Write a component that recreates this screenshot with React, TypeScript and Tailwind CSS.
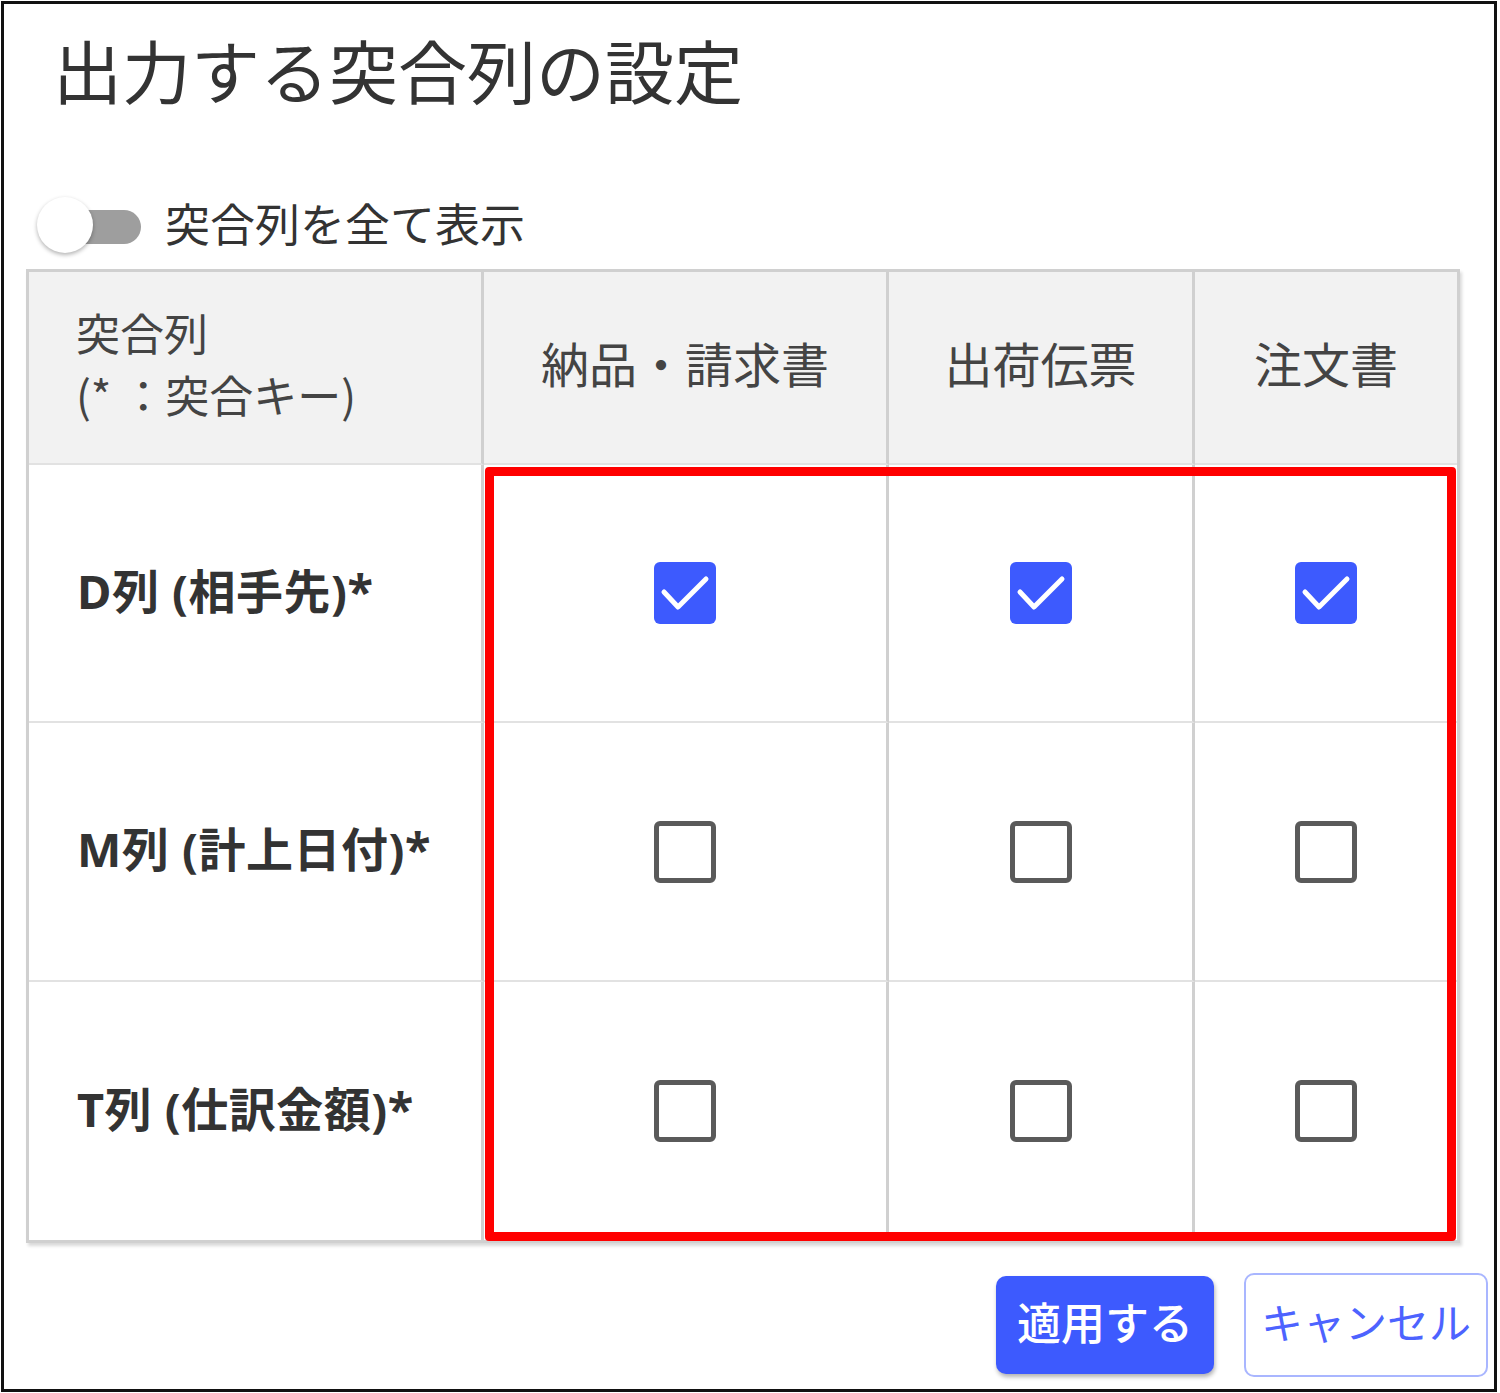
import React from "react";

const columns = ["納品・請求書", "出荷伝票", "注文書"];

const rows = [
  { label: "D列 (相手先)*", checked: [true, true, true] },
  { label: "M列 (計上日付)*", checked: [false, false, false] },
  { label: "T列 (仕訳金額)*", checked: [false, false, false] },
];

function Checkbox({ checked }: { checked: boolean }) {
  if (checked) {
    return (
      <div className="flex h-[62px] w-[62px] items-center justify-center rounded-[6px] bg-[#3d5afe]">
        <svg width="62" height="62" viewBox="0 0 62 62" fill="none">
          <polyline
            points="10,30 24,45 52,17"
            stroke="white"
            strokeWidth="5"
            strokeLinecap="round"
            strokeLinejoin="round"
          />
        </svg>
      </div>
    );
  }
  return (
    <div className="h-[62px] w-[62px] rounded-[6px] border-[5px] border-[#5a5a5a] bg-white" />
  );
}

function Toggle() {
  return (
    <div className="relative h-[60px] w-[104px]">
      <div className="absolute left-[14px] top-[13px] h-[34px] w-[90px] rounded-full bg-[#9e9e9e]" />
      <div className="absolute left-0 top-0 h-[56px] w-[56px] rounded-full bg-white shadow-[0_2px_4px_rgba(0,0,0,0.3)]" />
    </div>
  );
}

function clsCell(lastRow: boolean, lastCol: boolean) {
  if (lastRow && lastCol) return "flex items-center justify-center";
  if (lastRow) return "flex items-center justify-center border-r-[3px] border-r-[#d0d0d0]";
  if (lastCol) return "flex items-center justify-center border-b-2 border-b-[#e2e2e2]";
  return "flex items-center justify-center border-b-2 border-r-[3px] border-b-[#e2e2e2] border-r-[#d0d0d0]";
}

export default function App() {
  return (
    <div className="h-[1393px] w-[1500px] bg-white p-px font-['Noto_Sans','Noto_Sans_CJK_JP',sans-serif]">
      <div className="flex h-[1391px] w-[1496px] flex-col border-[3px] border-[#111]">
        <h1 className="pl-[49px] pt-[31px] text-[69px] leading-[69px] font-normal text-[#333] font-['Noto_Sans_CJK_JP',sans-serif]">
          出力する突合列の設定
        </h1>

        <div className="ml-[33px] mt-[93px] flex h-[60px] items-center gap-[24px]">
          <Toggle />
          <span className="pb-[9px] text-[45px] leading-none text-[#333] font-['Noto_Sans_CJK_JP',sans-serif]">
            突合列を全て表示
          </span>
        </div>

        <div className="relative ml-[22px] mt-[12px] w-[1434px]">
          <div className="grid grid-cols-[455px_405px_306px_262px] grid-rows-[193px_258px_259px_258px] border-[3px] border-[#d0d0d0] shadow-[2px_3px_3px_rgba(0,0,0,0.15)]">
            <div className="flex flex-col justify-center border-b-2 border-r-[3px] border-b-[#e2e2e2] border-r-[#d0d0d0] bg-[#f2f2f2] pb-[9px] pl-[47px] text-[44px] leading-[62px] text-[#444] font-['Noto_Sans_CJK_JP',sans-serif]">
              <span>突合列</span>
              <span>(* ：突合キー)</span>
            </div>
            {columns.map((c, i) => (
              <div
                key={c}
                className={
                  i < columns.length - 1
                    ? "flex items-center justify-center border-b-2 border-r-[3px] border-b-[#e2e2e2] border-r-[#d0d0d0] bg-[#f2f2f2] pb-[12px] text-[48px] text-[#444] font-['Noto_Sans_CJK_JP',sans-serif]"
                    : "flex items-center justify-center border-b-2 border-b-[#e2e2e2] bg-[#f2f2f2] pb-[12px] text-[48px] text-[#444] font-['Noto_Sans_CJK_JP',sans-serif]"
                }
              >
                {c}
              </div>
            ))}

            {rows.map((row, r) => {
              const last = r === rows.length - 1;
              return (
                <React.Fragment key={row.label}>
                  <div
                    className={
                      last
                        ? "flex items-center border-r-[3px] border-r-[#d0d0d0] pb-[4px] pl-[48px] text-[47px] tracking-[0.5px] font-bold text-[#333]"
                        : "flex items-center border-b-2 border-r-[3px] border-b-[#e2e2e2] border-r-[#d0d0d0] pb-[4px] pl-[48px] text-[47px] tracking-[0.5px] font-bold text-[#333]"
                    }
                  >
                    {row.label}
                  </div>
                  {row.checked.map((on, i) => (
                    <div
                      key={i}
                      className={clsCell(last, i === row.checked.length - 1)}
                    >
                      <Checkbox checked={on} />
                    </div>
                  ))}
                </React.Fragment>
              );
            })}
          </div>

          {/* annotation frame */}
          <div className="pointer-events-none absolute left-[459px] top-[198px] h-[774px] w-[971px] rounded-[4px] border-[9px] border-[#ff0000]" />
        </div>

        <div className="mr-[6px] mt-[30px] flex items-center justify-end gap-[30px] font-['Noto_Sans_CJK_JP',sans-serif]">
          <button className="h-[98px] w-[218px] rounded-[10px] bg-[#3d5afe] pb-[9px] text-[44px] font-medium text-white shadow-[1px_3px_4px_rgba(0,0,0,0.3)]">
            適用する
          </button>
          <button className="h-[104px] w-[244px] rounded-[10px] border-2 border-[#a9b6ff] bg-white pb-[9px] text-[42px] text-[#4d63ff]">
            キャンセル
          </button>
        </div>
      </div>
    </div>
  );
}
